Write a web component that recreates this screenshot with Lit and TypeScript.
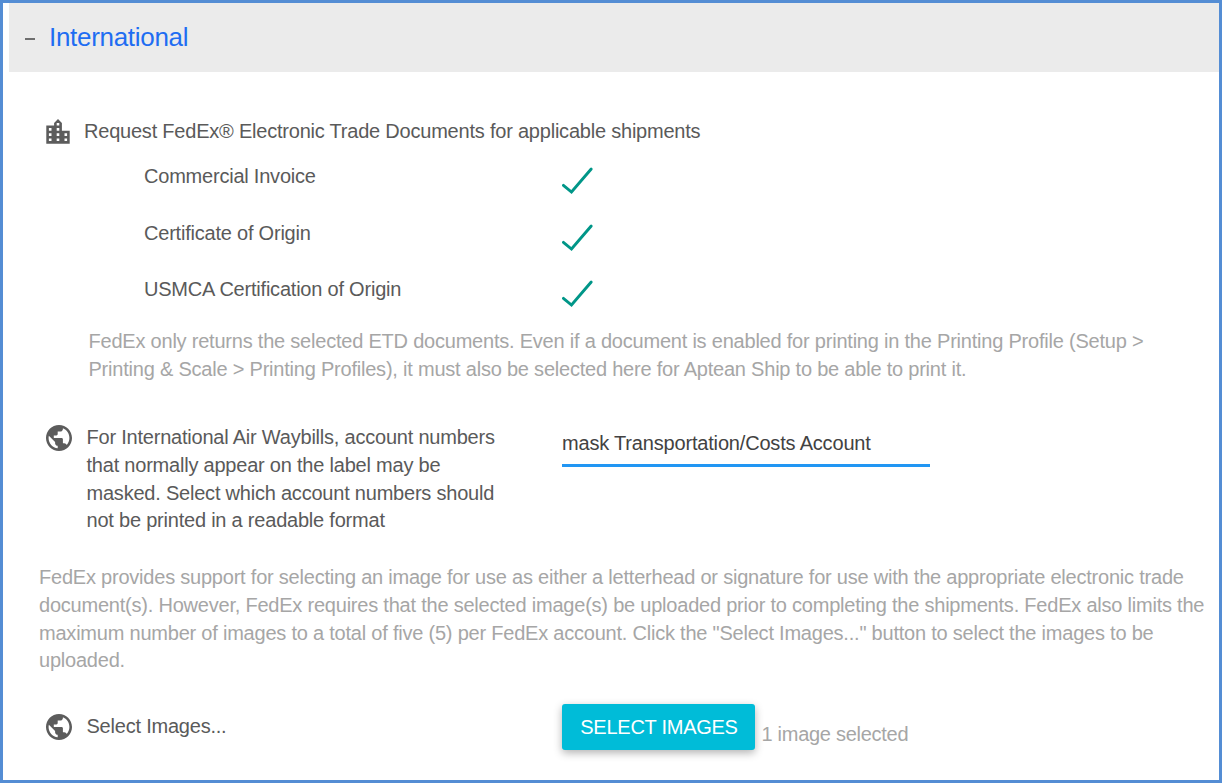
import { LitElement, html, css, svg } from "lit";
import { customElement, property } from "lit/decorators.js";

const ICONS: Record<string, unknown> = {
  city: svg`<path d="M15 11V5l-3-3-3 3v2H3v14h18V11h-6zm-8 8H5v-2h2v2zm0-4H5v-2h2v2zm0-4H5V9h2v2zm6 8h-2v-2h2v2zm0-4h-2v-2h2v2zm0-4h-2V9h2v2zm0-4h-2V5h2v2zm6 12h-2v-2h2v2zm0-4h-2v-2h2v2z"/>`,
  globe: svg`<path d="M12 2C6.48 2 2 6.48 2 12s4.48 10 10 10 10-4.480 10-10S17.520 2 12 2zm-1 17.930c-3.950-.490-7-3.850-7-7.930 0-.620.080-1.210.210-1.790L9 15v1c0 1.100.900 2 2 2v1.930zm6.900-2.540c-.260-.810-1-1.390-1.900-1.390h-1v-3c0-.550-.450-1-1-1H8v-2h2c.550 0 1-.450 1-1V7h2c1.100 0 2-.900 2-2v-.410c2.930 1.190 5 4.060 5 7.410 0 2.080-.800 3.970-2.100 5.390z"/>`,
};

@customElement("form-icon")
export class FormIcon extends LitElement {
  @property() name = "globe";
  static styles = css`
    :host { display: block; flex: none; }
    svg { display: block; width: 100%; height: 100%; fill: #5c5c5c; }
  `;
  render() {
    return html`<svg viewBox="-0.3 -0.3 24.6 24.6">${ICONS[this.name]}</svg>`;
  }
}

@customElement("check-row")
export class CheckRow extends LitElement {
  @property() label = "";
  static styles = css`
    :host { display: grid; grid-template-columns: 417px auto; align-items: start; height: 56.5px; white-space: nowrap; }
    svg { display: block; width: 34px; height: 30px; margin-top: 3px; fill: none; stroke: #009688; stroke-width: 2.9; stroke-linecap: round; }
  `;
  render() {
    return html`<span>${this.label}</span>
      <svg viewBox="0 0 34 30"><path d="M2.400 19.300 L10.500 26 L30.200 3" /></svg>`;
  }
}

@customElement("app-root")
export class AppRoot extends LitElement {
  static styles = css`
    :host {
      display: block;
      box-sizing: border-box;
      width: 1222px;
      height: 783px;
      border: 3px solid #548dd4;
      background: #fff;
      overflow: hidden;
      font: 20px/27.8px "Liberation Sans", Arial, sans-serif;
      letter-spacing: -0.215px;
      color: #5a5a5a;
    }
    .header { display: flex; align-items: center; height: 69px; margin-left: 6px; background: #ebebeb; }
    .dash { width: 10px; height: 2px; margin: 2px 14px 0 16px; background: #6e6e6e; }
    .title { margin: 0; font-size: 26px; font-weight: 400; letter-spacing: -0.3px; color: #1f6df2; }
    .section { display: flex; height: 27.8px; padding-top: 46px; margin-left: 41px; }
    .city { width: 32px; height: 32px; margin: -2px 10px 0 -2px; }
    .checks { margin: 17.4px 0 0 141px; height: 164.6px; }
    .hint { margin: 0 0 0 85.5px; color: #a6a6a6; white-space: nowrap; }
    .row { display: flex; margin-left: 41px; }
    .globe { width: 32px; height: 32px; margin: -2px 11.5px 0 -1px; }
    .label { width: 475.5px; white-space: nowrap; }
    .mask { margin-top: 40.6px; }
    .field { box-sizing: border-box; width: 368px; height: 37px; margin-top: 5.8px; border-bottom: 3px solid #2196f3; color: #424242; letter-spacing: -0.18px; white-space: nowrap; }
    .note { margin: 28.8px 0 0 36px; color: #a6a6a6; letter-spacing: -0.217px; white-space: nowrap; }
    .images { margin-top: 28.8px; }
    .images .globe { margin-top: 7px; }
    .images .label { padding-top: 9px; }
    .button { width: 193px; height: 46px; padding: 1px 0 0 1px; border: 0; border-radius: 3px; background: #00bcd8; color: #fff; font: inherit; letter-spacing: -0.26px; box-shadow: 0 3px 8px rgba(0, 0, 0, 0.3); }
    .count { margin: 17px 0 0 6.5px; color: #a6a6a6; letter-spacing: -0.28px; white-space: nowrap; }
  `;
  render() {
    return html`
      <div class="header"><span class="dash"></span><h1 class="title">International</h1></div>
      <div class="section">
        <form-icon class="city" name="city"></form-icon>
        <span>Request FedEx® Electronic Trade Documents for applicable shipments</span>
      </div>
      <div class="checks">
        <check-row label="Commercial Invoice"></check-row>
        <check-row label="Certificate of Origin"></check-row>
        <check-row label="USMCA Certification of Origin"></check-row>
      </div>
      <p class="hint">
        FedEx only returns the selected ETD documents. Even if a document is enabled for printing in the Printing Profile (Setup &gt;<br />
        Printing &amp; Scale &gt; Printing Profiles), it must also be selected here for Aptean Ship to be able to print it.
      </p>
      <div class="row mask">
        <form-icon class="globe" name="globe"></form-icon>
        <div class="label">
          For International Air Waybills, account numbers<br />
          that normally appear on the label may be<br />
          masked. Select which account numbers should<br />
          not be printed in a readable format
        </div>
        <div class="field">mask Transportation/Costs Account</div>
      </div>
      <p class="note">
        FedEx provides support for selecting an image for use as either a letterhead or signature for use with the appropriate electronic trade<br />
        document(s). However, FedEx requires that the selected image(s) be uploaded prior to completing the shipments. FedEx also limits the<br />
        maximum number of images to a total of five (5) per FedEx account. Click the "Select Images..." button to select the images to be<br />
        uploaded.
      </p>
      <div class="row images">
        <form-icon class="globe" name="globe"></form-icon>
        <div class="label">Select Images...</div>
        <button class="button">SELECT IMAGES</button>
        <span class="count">1 image selected</span>
      </div>
    `;
  }
}
